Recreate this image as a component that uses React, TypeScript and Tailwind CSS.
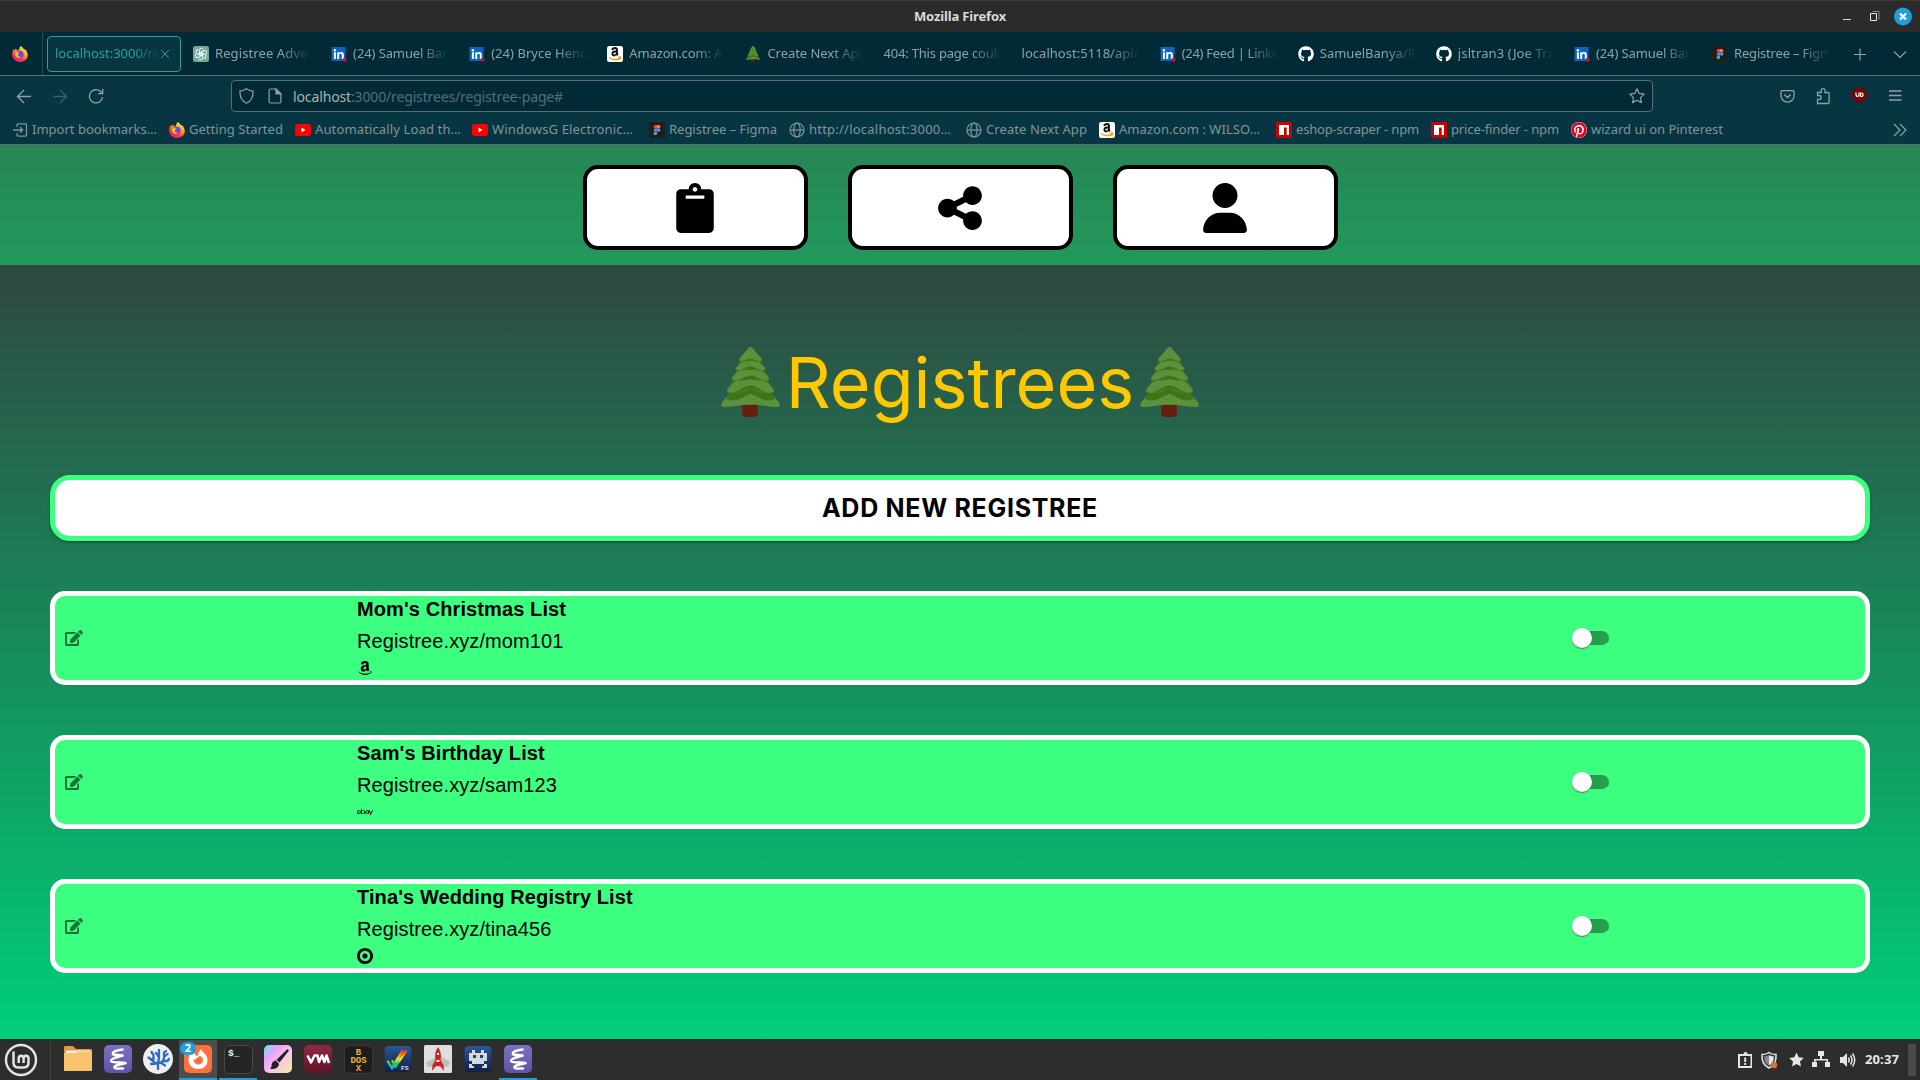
import React, { useLayoutEffect, useRef, useState } from "react";
import {
  FaAmazon,
  FaClipboard,
  FaEdit,
  FaGithub,
  FaPinterest,
} from "react-icons/fa";
import { FaShareNodes, FaUser } from "react-icons/fa6";
import { SiEbay, SiTarget } from "react-icons/si";

/** One line of text whose letter spacing is adjusted so that it takes `w` pixels. */
function Fit({ w, children, className = "" }: { w: number; children: string; className?: string }) {
  const ref = useRef<HTMLSpanElement>(null);
  const [spacing, setSpacing] = useState(0);
  useLayoutEffect(() => {
    if (ref.current) {
      const natural = ref.current.getBoundingClientRect().width;
      setSpacing((w - natural) / children.length);
    }
  }, [w, children]);
  return (
    <span ref={ref} className={"inline-block whitespace-pre " + className} style={{ letterSpacing: spacing }}>
      {children}
    </span>
  );
}

function Firefox() {
  return (
    <svg viewBox="0 0 16 16" className="h-4 w-4 shrink-0">
      <defs>
        <linearGradient id="fx" x1="0.85" y1="0.1" x2="0.25" y2="1">
          <stop offset="0" stopColor="#fff44f" />
          <stop offset="0.4" stopColor="#ff980e" />
          <stop offset="0.7" stopColor="#ff3647" />
          <stop offset="1" stopColor="#e31587" />
        </linearGradient>
      </defs>
      <path fill="url(#fx)" d="M8.7 0c2 1.2 2.500 2.300 3.200 3.200.5.1 1.600.2 2.200 1.200 2 3.200 2.300 6.100.4 8.700C12.900 15.200 10.600 16 8.200 16 3.800 16 .3 12.800.1 8.400 0 6.400.8 4 2 2.900l.5 1.400L4 2.200 4.600 4l1.900.6C7.200 4 7.100 1.600 8.700 0z" />
      <circle cx="8" cy="8.300" r="3.600" fill="#7542e5" />
      <path fill="#ffbd2f" d="M3 6.600c1.800-1 3.300-.6 4.500.5-1 .4-1.500 1-1.500 1.900 0 1.400 1.400 2 3 1.600-1 1.500-3.200 1.900-4.700.5C3 10 2.600 8.300 3 6.600z" />
    </svg>
  );
}

function OpenAi() {
  return (
    <svg viewBox="0 0 16 16" className="h-4 w-4 shrink-0">
      <rect width="16" height="16" rx="2.500" fill="#74aa9c" />
      <g fill="none" stroke="#fff" strokeWidth="0.9">
        {[0, 60, 120, 180, 240, 300].map((a) => (
          <path key={a} transform={`rotate(${a} 8 8)`} d="M6.300 7V4.200a2.200 2.200 0 0 1 4.100-.9M6.300 5.800l3.600 2" />
        ))}
      </g>
    </svg>
  );
}

function LinkedIn() {
  return (
    <svg viewBox="0 0 16 16" className="h-4 w-4 shrink-0">
      <rect x="0.500" y="1" width="14" height="14" fill="#0a66c2" />
      <circle cx="3.900" cy="4.200" r="1.200" fill="#fff" />
      <path fill="#fff" d="M2.900 6.200h2V13h-2zM6.200 6.200h1.900v.9c.5-.8 1.200-1.100 2.100-1.100 2 0 2.600 1.200 2.600 3.200V13h-2V9.500c0-1.100-.3-1.700-1.200-1.700s-1.400.6-1.400 1.700V13h-2z" />
      <circle cx="13.700" cy="13.700" r="2" fill="#cb112d" />
    </svg>
  );
}

function AmazonFav() {
  return (
    <svg viewBox="0 0 16 16" className="h-4 w-4 shrink-0">
      <rect width="16" height="16" rx="2.200" fill="#fff" />
      <path fill="none" stroke="#111" strokeWidth="1.900" d="M5.300 4C5.600 2.600 6.600 2 7.900 2 9.500 2 10 2.900 10 4.200v3.500c0 .8.300 1.200.8 1.700M9.900 5.200C7 5.200 5.400 5.900 5.400 7.700c0 2.400 3.800 2.400 4.500-.6" />
      <path fill="none" stroke="#f90" strokeWidth="1.400" d="M2 11.500c3.700 2.800 8 2.700 11 .7M11.300 11c1.300-.3 2.400-.1 2.200.4-.1.800-.4 1.600-1 2.200" />
    </svg>
  );
}

function Tree({ className }: { className: string }) {
  return (
    <svg viewBox="0 0 176 211" className={className} preserveAspectRatio="none">
      <rect x="63" y="165" width="47" height="46" rx="13" fill="#64200f" />
      <g fill="#3f7419">
        <path d="M62 30h52l8 14-12 20H66L54 44z" />
        <path d="M50 60h76l8 22-22 12H64L42 82z" />
        <path d="M40 92h96l10 20-26 22H56L30 112z" />
        <path d="M32 125h112l16 32-40 12H56l-40-9z" />
      </g>
      <g fill="#5c913b">
        <path d="M88 0c4 0 7 4 10 8l22 25c4 5 1 10-5 10-10 0-17-8-27-8s-17 8-27 8c-6 0-9-5-5-10L78 8c3-4 6-8 10-8z" />
        <path d="M88 43c8-4 15 3 26 2 8 6 14 13 18 19 2 5-4 6-10 6-12 0-24-12-34-12S66 70 54 70c-6 0-12-1-10-6 4-6 10-13 18-19 11 1 18-6 26-2z" />
        <path d="M88 70c10-4 18 3 32 0 9 6 18 14 23 22 3 6-4 8-10 8-16 0-31-14-45-14S59 100 43 100c-6 0-13-2-10-8 5-8 14-16 23-22 14 3 22-4 32 0z" />
        <path d="M88 98c14-2 20 6 38 2 14 7 26 18 31 28 4 8-5 11-12 10-22-1-38-22-57-22s-35 21-57 22c-7 1-16-2-12-10 5-10 17-21 31-28 18 4 24-4 38-2z" />
        <path d="M88 125c16 0 28 15 56 14 13 9 25 21 31 32 3 8-4 11-13 10-30-3-50-7-74-7s-44 4-74 7c-9 1-16-2-13-10 6-11 18-23 31-32 28 1 40-14 56-14z" />
      </g>
      <path fill="#3f7419" d="M30 139c22 4 42-10 58-14 16 4 36 18 58 14l15 18c-28 12-50-6-73-16-23 10-45 28-73 16z" />
    </svg>
  );
}

function Figma() {
  return (
    <svg viewBox="0 0 16 16" className="h-4 w-4 shrink-0">
      <rect width="16" height="16" fill="#1e1e1e" />
      <path fill="#f24e1e" d="M8 3H6.300a1.700 1.700 0 0 0 0 3.400H8z" />
      <path fill="#ff7262" d="M8 3h1.700a1.700 1.700 0 0 1 0 3.400H8z" />
      <path fill="#a259ff" d="M8 6.400H6.300a1.700 1.700 0 0 0 0 3.400H8z" />
      <circle cx="9.700" cy="8.100" r="1.700" fill="#1abcfe" />
      <path fill="#0acf83" d="M8 9.800H6.300A1.700 1.700 0 1 0 8 11.500z" />
    </svg>
  );
}

function Npm() {
  return (
    <svg viewBox="0 0 16 16" className="h-4 w-4 shrink-0">
      <rect width="16" height="16" fill="#cb0000" />
      <path fill="#fff" d="M3 3h10v10h-2.300V5.500H8V13H3z" />
    </svg>
  );
}

function Globe() {
  return (
    <svg viewBox="0 0 16 16" className="h-4 w-4 shrink-0" fill="none" stroke="#839496" strokeWidth="1.200">
      <circle cx="8" cy="8" r="7" />
      <ellipse cx="8" cy="8" rx="3.200" ry="7" />
      <path d="M1 8h14" />
    </svg>
  );
}

function Yt() {
  return (
    <span className="flex h-4 w-4 shrink-0 items-center justify-center">
      <svg viewBox="0 0 16 12" className="h-3 w-4">
        <rect width="16" height="12" rx="3" fill="#f00" />
        <path d="M6.500 3.500v5L10.500 6z" fill="#fff" />
      </svg>
    </span>
  );
}

function ImportIcon() {
  return (
    <svg viewBox="0 0 16 16" className="h-4 w-4 shrink-0" fill="none" stroke="#839496" strokeWidth="1.300">
      <path d="M5 5V3.200c0-.8.500-1.300 1.300-1.300h6.900c.8 0 1.300.5 1.300 1.300v9.600c0 .8-.5 1.300-1.300 1.300H6.300c-.8 0-1.300-.5-1.300-1.300V11M1 8h9.500M8 5.300 10.700 8 8 10.700" />
    </svg>
  );
}

const tabs: { icon?: React.ReactNode; text: string; w: number }[] = [
  { icon: <OpenAi />, text: "Registree Adver", w: 98 },
  { icon: <LinkedIn />, text: "(24) Samuel Ban", w: 97 },
  { icon: <LinkedIn />, text: "(24) Bryce Hend", w: 97 },
  { icon: <AmazonFav />, text: "Amazon.com: A", w: 93 },
  { icon: <span className="flex h-4 w-4 shrink-0 justify-center"><Tree className="h-4 w-3.5" /></span>, text: "Create Next App", w: 99 },
  { text: "404: This page could", w: 121 },
  { text: "localhost:5118/api/", w: 117 },
  { icon: <LinkedIn />, text: "(24) Feed | Linke", w: 97 },
  { icon: <FaGithub className="h-4 w-4 shrink-0 text-white" />, text: "SamuelBanya/R", w: 96 },
  { icon: <FaGithub className="h-4 w-4 shrink-0 text-white" />, text: "jsltran3 (Joe Tra", w: 97 },
  { icon: <LinkedIn />, text: "(24) Samuel Ban", w: 97 },
  { icon: <Figma />, text: "Registree – Figm", w: 98 },
];

const bookmarks: { icon: React.ReactNode; text: string; w: number; box: number }[] = [
  { icon: <ImportIcon />, text: "Import bookmarks…", w: 125, box: 124 },
  { icon: <Firefox />, text: "Getting Started", w: 94, box: 93 },
  { icon: <Yt />, text: "Automatically Load th…", w: 146, box: 144 },
  { icon: <Yt />, text: "WindowsG Electronic…", w: 141, box: 144 },
  { icon: <Figma />, text: "Registree – Figma", w: 108, box: 107 },
  { icon: <Globe />, text: "http://localhost:3000…", w: 142, box: 144 },
  { icon: <Globe />, text: "Create Next App", w: 101, box: 100 },
  { icon: <AmazonFav />, text: "Amazon.com : WILSO…", w: 141, box: 144 },
  { icon: <Npm />, text: "eshop-scraper - npm", w: 123, box: 122 },
  { icon: <Npm />, text: "price-finder - npm", w: 108, box: 107 },
  { icon: <span className="flex h-4 w-4 shrink-0 rounded-full bg-white"><FaPinterest className="h-4 w-4 text-[#e60023]" /></span>, text: "wizard ui on Pinterest", w: 132, box: 131 },
];

function TitleBar() {
  return (
    <div className="grid h-8 shrink-0 grid-cols-[1fr_auto_1fr] items-center border-t border-[#3b3b3b] bg-[#2b2b2b] text-[13px] font-bold text-[#dadada]">
      <span />
      <Fit w={92}>Mozilla Firefox</Fit>
      <div className="flex items-center justify-end pr-[8px]">
        <svg viewBox="0 0 69 20" className="h-5 w-[69px]">
          <path d="M0 12.500h8" stroke="#dadada" />
          <path d="M29.500 4.500h6.500v8" stroke="#8a8a8a" fill="none" />
          <path d="M27.500 6.500h6v7h-6z" stroke="#e8e8e8" fill="none" />
          <circle cx="60" cy="9.500" r="9" fill="#1f9ede" />
          <path d="m57 6.500 6 6m0-6-6 6" stroke="#fff" strokeWidth="2.200" />
        </svg>
      </div>
    </div>
  );
}

function TabStrip() {
  return (
    <div className="flex h-[43px] shrink-0 items-center bg-[#002b36] text-[13px] text-[#93a1a1]">
      <div className="flex h-full w-[43px] items-center justify-end border-r border-[#234a53] pr-[14px]">
        <Firefox />
      </div>
      <div className="ml-1 flex h-9 w-[134px] shrink-0 items-center rounded border border-[#2aa198] bg-[#073642] pl-[7px] text-[#2aa198]">
        <div className="w-[106px] shrink-0 overflow-hidden [mask-image:linear-gradient(to_right,black_75%,transparent)]">
          <Fit w={105}>localhost:3000/re</Fit>
        </div>
        <svg viewBox="0 0 8 8" className="h-2 w-2 shrink-0" stroke="#2aa198" strokeWidth="1">
          <path d="m0 0 8 8M8 0 0 8" />
        </svg>
      </div>
      {tabs.map((t, i) => (
        <div key={i} className="flex w-[138.100px] shrink-0 items-center gap-[6px] pt-px pr-[4px] pl-[12px]">
          {t.icon}
          <div className="min-w-0 flex-1 overflow-hidden [mask-image:linear-gradient(to_left,transparent_4px,black_34px)]">
            <Fit w={t.w}>{t.text}</Fit>
          </div>
        </div>
      ))}
      <svg viewBox="0 0 56 16" className="ml-[14px] h-4 w-[56px]" fill="none" stroke="#93a1a1" strokeWidth="1.200">
        <path d="M2 8.500h12M8 2.500v12M42 5.500l6 6 6-6" />
      </svg>
    </div>
  );
}

function NavBar() {
  return (
    <div className="flex h-[38px] shrink-0 items-center border-t border-[#586e75] bg-[#073642] pt-[3px] text-[#93a1a1]">
      <svg viewBox="0 0 90 16" className="ml-4 h-4 w-[90px]" fill="none" stroke="#93a1a1" strokeWidth="1.300">
        <path d="M15 8.500H1.500M8 2 1.500 8.500 8 15" />
        <path opacity="0.400" d="M37 8.500h13.500M44 2 50.500 8.500 44 15" />
        <path d="M86.600 9A6.600 6.600 0 1 1 84.300 3.200L86.500 5.300M86.700 1v4.600h-4.700" />
      </svg>
      <div className="ml-[125px] flex h-8 w-[1422px] items-center rounded border border-[#586e75] bg-[#002b36] pl-[7px] text-[14px]">
        <svg viewBox="0 0 44 16" className="h-4 w-11 shrink-0" fill="none" stroke="#93a1a1" strokeWidth="1.200">
          <path d="M7.500.8c2 1.300 4.200 2.300 6.600 2.400 0 5.800-1.900 10-6.600 12-4.700-2-6.600-6.200-6.600-12C3.300 3.100 5.500 2.100 7.500.8z" />
          <path d="M37 1h-5.500a1.400 1.400 0 0 0-1.400 1.400v11.200a1.400 1.400 0 0 0 1.400 1.400h9a1.400 1.400 0 0 0 1.400-1.400V6z" />
          <path d="M37 1v5h5z" fill="#93a1a1" />
        </svg>
        <span className="ml-[10px] flex">
          <Fit w={58} className="text-[#a9b4b4]">localhost</Fit>
          <Fit w={212} className="text-[#586e75]">:3000/registrees/registree-page#</Fit>
        </span>
        <svg viewBox="0 0 16 16" className="mr-[7px] ml-auto h-4 w-4" fill="none" stroke="#93a1a1" strokeWidth="1.200" strokeLinejoin="round">
          <path d="m8 .8 2.200 4.600 5 .7-3.700 3.500.9 5L8 12.200l-4.400 2.400.9-5L.8 6.100l5-.7z" />
        </svg>
      </div>
      <svg viewBox="0 0 124 18" className="ml-[126px] h-[18px] w-[124px]" fill="none" stroke="#93a1a1" strokeWidth="1.300">
        <path d="M3 3.600h11c.7 0 1 .4 1 1v4.100a6.500 6.500 0 0 1-13 0V4.600c0-.6.4-1 1-1zM5.300 7.500l3.200 3 3.200-3" />
        <path d="M38.500 16.500h10.700c.6 0 .9-.3.900-.9V6.400c0-.6-.3-.9-.9-.9H46V3.500a1.900 1.900 0 0 0-3.800 0v2h-3.700v3h1.700a1.900 1.900 0 0 1 0 3.800h-1.700z" />
        <path stroke="none" fill="#800000" d="M80.500.5c2 1.300 4.500 1.800 7 2v6.500c0 3.300-3.500 5.500-7 7.300-3.500-1.800-7-4-7-7.300V2.500c2.500-.2 5-.7 7-2z" />
        <path stroke="#fff" strokeWidth="1.200" d="M77 5.500v2.300c0 2.200 3 2.200 3 0V5.500M81.500 6v3.500h.8c2.500 0 2.500-3.500 0-3.500z" />
        <path d="M110 4h12.500M110 8.500h12.500M110 13h12.500" />
      </svg>
    </div>
  );
}

function BookmarkBar() {
  return (
    <div className="flex h-8 shrink-0 items-center gap-[13px] border-b border-[#586e75] bg-[#073642] pt-[3px] pl-3 text-[13px] text-[#839496]">
      {bookmarks.map((b) => (
        <div key={b.text} className="flex shrink-0 items-center gap-1">
          {b.icon}
          <div className="flex" style={{ width: b.box }}>
            <Fit w={b.w}>{b.text}</Fit>
          </div>
        </div>
      ))}
      <svg viewBox="0 0 14 14" className="mr-[13px] ml-auto h-3.5 w-3.5" fill="none" stroke="#93a1a1" strokeWidth="1.200">
        <path d="m1 1 6 6-6 6M7 1l6 6-6 6" />
      </svg>
    </div>
  );
}

const registrees = [
  { name: "Mom's Christmas List", url: "Registree.xyz/mom101", icon: <FaAmazon /> },
  { name: "Sam's Birthday List", url: "Registree.xyz/sam123", icon: <SiEbay /> },
  { name: "Tina's Wedding Registry List", url: "Registree.xyz/tina456", icon: <SiTarget /> },
];

function Toggle() {
  return (
    <div className="relative flex h-[14px] w-[34px] items-center">
      <div className="h-[14px] w-full rounded-[7px] bg-black/38" />
      <div className="absolute -left-[3px] h-5 w-5 rounded-full bg-white shadow-[0px_2px_1px_-1px_rgba(0,0,0,0.2),0px_1px_1px_0px_rgba(0,0,0,0.14),0px_1px_3px_0px_rgba(0,0,0,0.12)]" />
    </div>
  );
}

function Page() {
  const navIcons = [FaClipboard, FaShareNodes, FaUser];
  return (
    <div className="flex h-[894px] shrink-0 flex-col">
      <div className="flex h-[120px] shrink-0 justify-center gap-10 bg-linear-to-b/srgb from-[#278553] to-[#22995c] pt-5">
        {navIcons.map((Icon, i) => (
          <button key={i} className="flex h-[85px] w-[225px] items-center justify-center rounded-[15px] border-4 border-black bg-white text-[50px] text-black">
            <Icon />
          </button>
        ))}
      </div>
      <div className="flex flex-1 flex-col bg-linear-to-b/srgb from-[#2f4840] to-[#00cf78] px-[50px]">
        <div className="mt-[76px] flex h-[84px] items-center justify-center font-[Inter] text-[70px] leading-none text-[#ffc800]">
          <Tree className="mb-[3px] h-[70px] w-[59px]" />
          <span className="mx-[4px] w-[352px] text-center">Registrees</span>
          <Tree className="mb-[3px] h-[70px] w-[59px]" />
        </div>
        <button className="mt-[50px] flex h-[66px] items-center justify-center rounded-[20px] border-[5px] border-[#3cff7f] bg-white pt-0.5 font-[Inter] text-[25px] font-bold text-black shadow-[0px_3px_1px_-2px_rgba(0,0,0,0.2),0px_2px_2px_0px_rgba(0,0,0,0.14),0px_1px_5px_0px_rgba(0,0,0,0.12)]">
          <Fit w={276}>ADD NEW REGISTREE</Fit>
        </button>
        <div className="mt-[50px] flex flex-col gap-[50px]">
          {registrees.map((r) => (
            <div key={r.name} className="flex h-[94px] items-center rounded-[15px] border-[5px] border-white bg-[#3cff7f] pl-[10px] font-['Liberation_Sans']">
              <FaEdit className="h-4 w-[18px] shrink-0 text-black/54" />
              <div className="ml-[274px] flex w-[1218px] flex-col pb-1 text-xl leading-8 tracking-[0.1px] text-black">
                <span className="font-bold">{r.name}</span>
                <span>{r.url}</span>
                <span className="flex h-[22px] items-center text-base">{r.icon}</span>
              </div>
              <Toggle />
            </div>
          ))}
        </div>
      </div>
    </div>
  );
}

function TaskIcon({ active, open, children }: { active?: boolean; open?: boolean; children: React.ReactNode }) {
  return (
    <div className={"relative mr-0.5 flex h-full w-[38px] shrink-0 items-center justify-center border-b-2 " + (active ? "bg-[#4d4d4d] " : "") + (open ? "border-[#1f9ede]" : "border-transparent")}>
      <svg viewBox="0 0 28 28" className="h-7 w-7 overflow-visible">{children}</svg>
      {active && (
        <span className="absolute top-0.5 left-px flex h-[13px] w-4 items-center justify-center rounded-full bg-[#1f9ede] text-[11px] font-bold text-white">2</span>
      )}
    </div>
  );
}

function Emacs() {
  return (
    <>
      <rect width="28" height="28" rx="5" fill="url(#em)" />
      <path fill="none" stroke="#fff" strokeWidth="2.600" strokeLinecap="round" strokeLinejoin="round" d="M18.500 4.500C13 5 8 7 9 9c1 1.600 6 .8 9.500 1.600C15 11.500 6.500 13.500 7 16c.5 2 9 1.300 14.500 2-5 1.500-11.500 2.500-11 4.500.5 1.600 5.500.8 8.500 1" />
    </>
  );
}

function Taskbar() {
  return (
    <div className="flex h-[41px] shrink-0 items-center border-t border-[#1f2a25] bg-[#2d2d2d]">
      <svg viewBox="0 0 34 34" className="ml-1 h-[34px] w-[34px] shrink-0" fill="none" stroke="#e4e4e4">
        <circle cx="17" cy="17" r="15" strokeWidth="2.400" />
        <path strokeWidth="2.500" d="M9.500 8.500v11.300c0 3 1.700 4.700 4.700 4.700h5.600c3 0 4.700-1.700 4.700-4.700v-4.300c0-3.800-4.900-3.800-4.900 0V20M19.600 15.500c0-3.800-4.900-3.800-4.900 0V20" />
      </svg>
      <div className="mr-2 ml-3 h-[37px] w-px bg-[#444]" />
      <svg width="0" height="0" className="absolute">
        <defs>
          <linearGradient id="em" x2="0" y2="1"><stop stopColor="#7a73c4" /><stop offset="1" stopColor="#5d53a8" /></linearGradient>
          <linearGradient id="br" x1="0" y1="0" x2="1" y2="1"><stop stopColor="#5ce9f5" /><stop offset="0.300" stopColor="#e9a2f5" /><stop offset="0.550" stopColor="#f9c4ee" /><stop offset="1" stopColor="#f3ee9a" /></linearGradient>
          <linearGradient id="rb" x2="0" y2="1"><stop stopColor="#f33" /><stop offset="0.300" stopColor="#ff9800" /><stop offset="0.500" stopColor="#f5ee2c" /><stop offset="0.750" stopColor="#20d23c" /><stop offset="1" stopColor="#1eb0ff" /></linearGradient>
          <linearGradient id="nv" x2="0" y2="1"><stop stopColor="#2b5797" /><stop offset="1" stopColor="#0f2148" /></linearGradient>
          <linearGradient id="vm" x2="0" y2="1"><stop stopColor="#8e2a44" /><stop offset="1" stopColor="#5e1227" /></linearGradient>
        </defs>
      </svg>
      <TaskIcon>
        <path fill="#d89d3e" d="M0 2.500C0 1.500.5 1 1.500 1H9l3 3h14.500c1 0 1.500.5 1.500 1.500V12H0z" />
        <path fill="#f3f3f3" d="M2 5.500h24V9H2z" />
        <path fill="#f9c36e" d="M0 8h11l3-1.500h14V25c0 .7-.5 1-1 1H1c-.6 0-1-.3-1-1z" />
      </TaskIcon>
      <TaskIcon><Emacs /></TaskIcon>
      <TaskIcon>
        <circle cx="14" cy="14" r="15" fill="#efefef" />
        <path fill="none" stroke="#2d6cc0" strokeWidth="2.300" strokeLinecap="round" strokeLinejoin="round" d="M14 24v-6M14 18c-4 0-5-1-5.500-4M4.500 12.500 9 16M9.500 15V10l-2-3M14 18l1-5V5M15 12l-3-4M14.500 18c4 0 5-2 5.500-5V7.500M20 12l3.500-3M19 16h4.500l1.500-2M7 19l5-.5M18 18.500l3 2M20 8l2-2" />
      </TaskIcon>
      <TaskIcon active open>
        <rect width="28" height="28" rx="5" fill="#ff7139" />
        <path fill="#fff" fillRule="evenodd" d="M14 24c-5.500 0-9.500-3.800-9.500-9 0-3 1-5.500 2.500-7l.7 2.300L10 8l1.500 2.200L14 11c.2-3 1-5 3.500-7 .3 1.800 1 2.500 3 4.500 2 2 3 4.500 3 7 0 5-4 8.500-9.500 8.500zm.500-4.500c2.700 0 4.500-2 4.500-4.300 0-2.700-1.500-4-3.800-4.200l-1.200 1.500c-1.500.3-2 1-2.300 2l-2-.3c0 3.300 2 5.300 4.800 5.300z" />
      </TaskIcon>
      <TaskIcon open>
        <rect x="0.500" y="0.500" width="28" height="28" rx="5" fill="#242424" stroke="#4a4a4a" />
        <text x="4" y="10.500" fontFamily="Liberation Mono" fontSize="9.500" fontWeight="bold" fill="#eee">$_</text>
      </TaskIcon>
      <TaskIcon>
        <rect width="28" height="28" rx="5" fill="url(#br)" />
        <path fill="#222" d="m23.500 4 1.500 1.500-9.500 12-3-2.800zM11.800 15.500l3 3c.5 3.500-3 6-9 5.500 2-1 1.500-3 2-5 .6-2.200 2.200-3.500 4-3.500z" />
      </TaskIcon>
      <TaskIcon>
        <rect width="28" height="28" rx="5" fill="url(#vm)" />
        <path fill="none" stroke="#fff" strokeWidth="2.500" strokeLinejoin="round" d="m3.500 10.500 3.500 7 3.500-7h3L15 17l3-6.500 2.500 6.500L22.500 10.500l2.500 7.500" />
      </TaskIcon>
      <TaskIcon>
        <rect x="0.500" y="0.500" width="28" height="28" rx="5" fill="#1d1d1d" stroke="#3a3a3a" />
        <g fontFamily="Liberation Mono" fontSize="9" fontWeight="bold" fill="#e9b63d" textAnchor="middle">
          <text x="14.500" y="9.500">B</text>
          <text x="14.500" y="17.500">DOS</text>
          <text x="14.500" y="25.500">X</text>
        </g>
      </TaskIcon>
      <TaskIcon>
        <rect x="0.500" y="1" width="27" height="26" rx="4" fill="url(#nv)" />
        <path fill="none" stroke="url(#rb)" strokeWidth="2.400" d="m3.500 16 4.500 7L19 5M8 15.500l3.500 6L22.500 5.500" />
        <text x="17" y="24.500" fontFamily="Liberation Sans" fontSize="6" fontWeight="bold" fill="#d8e0ea">FS</text>
      </TaskIcon>
      <TaskIcon>
        <rect width="28" height="28" rx="1.500" fill="#dedede" />
        <path fill="#bdbdbd" d="M2 18c3-4 6-1 7-5 3 1 8 0 9-2 2 4 6 2 8 7l-2 4H4z" />
        <path fill="#d3201f" d="M14 2c3 4 3.500 9 2.500 13l3 5 .5 6-4-5h-4l-4 5 .5-6 3-5C10.500 11 11 6 14 2z" />
        <path fill="#fff" d="M13 8h2v2h-2zM12.500 15h3v2h-3z" />
      </TaskIcon>
      <TaskIcon>
        <rect x="0.500" y="1" width="27" height="26" rx="4" fill="url(#nv)" />
        <path fill="#d5d9de" fillRule="evenodd" d="M8 5h3v3h6V5h3v3h3v8h-3v3h3v4h-5v-2h2v-2H8v2h2v2H5v-4h3v-3H5V8h3zm1 5v3h3v-3zm7 0v3h3v-3z" />
      </TaskIcon>
      <TaskIcon open><Emacs /></TaskIcon>
      <div className="ml-auto flex h-full items-center pr-1">
        <svg viewBox="0 0 120 18" className="h-[18px] w-[120px]" fill="#e6e6e6">
          <path fillRule="evenodd" d="M1 3h4.500a2 2 0 0 1 4 0H14v14H0V3zm1 2v10h10.500V5z" />
          <path d="M6.200 6.500h2V11h-2zM6.200 12h2v2h-2z" />
          <path d="M31 1.500c2 1.500 4.500 2 7 2 .5 6-1.500 11-7 13.500-5.500-2.500-7.500-7.500-7-13.500 2.500 0 5-.5 7-2z" fill="#3a3a3a" stroke="#e6e6e6" strokeWidth="1.500" />
          <path d="M31 4c1.500 1 3 1.300 4.800 1.400 0 4-1.300 7.300-4.800 9.200z" />
          <path d="M31 4c-1.500 1-3 1.300-4.800 1.400 0 4 1.300 7.300 4.800 9.200z" fill="#888" />
          <circle cx="36" cy="14" r="3.200" fill="#e0703a" />
          <path d="m58.500 1.500 2.200 4.800 5.100.6-3.800 3.500 1 5.100-4.500-2.500-4.500 2.500 1-5.100-3.800-3.500 5.100-.6z" />
          <path d="M80 0h6v5h-2v3h6v3h2v5h-5v-5h1.500V9.500h-11V11H79v5h-5v-5h2V8h6V5h-2z" />
          <path d="M102 6h3l4-4v14l-4-4h-3z" />
          <path fill="none" stroke="#e6e6e6" strokeWidth="1.500" d="M110.500 6.500q1.500 2.500 0 5M112.500 4.500q3 4.500 0 9M114.500 2.500q4.500 6.500 0 13" />
        </svg>
        <Fit w={34} className="ml-[7px] text-[13px] font-bold text-[#e6e6e6]">20:37</Fit>
        <div className="ml-[9px] h-8 w-2 bg-[#4a4a4a]" />
      </div>
    </div>
  );
}

export default function App() {
  return (
    <div className="flex h-[1080px] w-[1920px] flex-col overflow-hidden font-['Noto_Sans',sans-serif]">
      <TitleBar />
      <TabStrip />
      <NavBar />
      <BookmarkBar />
      <Page />
      <Taskbar />
    </div>
  );
}
